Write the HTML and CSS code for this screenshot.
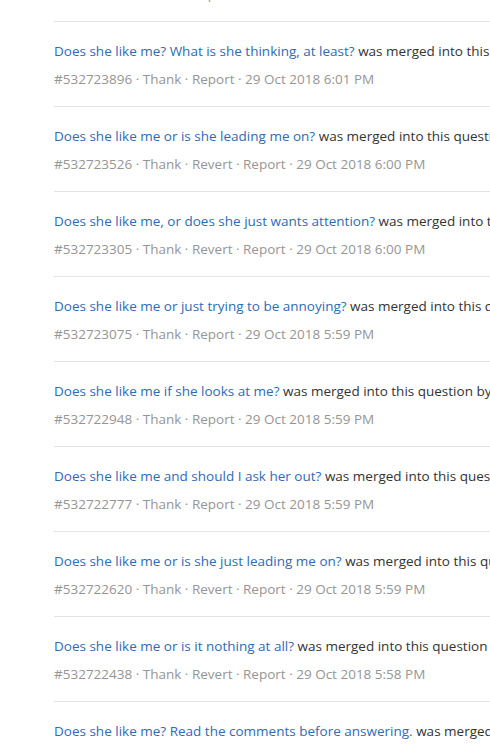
FILE: index.html
```html
<!DOCTYPE html>
<html lang="en">
<head>
    <meta charset="UTF-8">
    <meta name="viewport" content="width=device-width, initial-scale=1.0">
    <title>Merge history</title>
    <link rel="stylesheet" href="styles.css">
</head>
<body>
    <div class="historial">
        <div class="entrada entrada-previa">
            <p class="titulo-entrada"><a href="#">Does she like me?</a> was merged into this question by a moderator</p>
            <p class="meta-entrada">#532724012 · Thank · Report · 29 Oct 2018 6:02 PM</p>
        </div>
        <div class="entrada">
            <p class="titulo-entrada"><a href="#">Does she like me? What is she thinking, at least?</a> was merged into this question by a moderator</p>
            <p class="meta-entrada">#532723896 · Thank · Report · 29 Oct 2018 6:01 PM</p>
        </div>
        <div class="entrada">
            <p class="titulo-entrada"><a href="#">Does she like me or is she leading me on?</a> was merged into this question by a moderator</p>
            <p class="meta-entrada">#532723526 · Thank · Revert · Report · 29 Oct 2018 6:00 PM</p>
        </div>
        <div class="entrada">
            <p class="titulo-entrada"><a href="#">Does she like me, or does she just wants attention?</a> was merged into this question by a moderator</p>
            <p class="meta-entrada">#532723305 · Thank · Revert · Report · 29 Oct 2018 6:00 PM</p>
        </div>
        <div class="entrada">
            <p class="titulo-entrada"><a href="#">Does she like me or just trying to be annoying?</a> was merged into this question by a moderator</p>
            <p class="meta-entrada">#532723075 · Thank · Report · 29 Oct 2018 5:59 PM</p>
        </div>
        <div class="entrada">
            <p class="titulo-entrada"><a href="#">Does she like me if she looks at me?</a> was merged into this question by a moderator</p>
            <p class="meta-entrada">#532722948 · Thank · Report · 29 Oct 2018 5:59 PM</p>
        </div>
        <div class="entrada">
            <p class="titulo-entrada"><a href="#">Does she like me and should I ask her out?</a> was merged into this question by a moderator</p>
            <p class="meta-entrada">#532722777 · Thank · Report · 29 Oct 2018 5:59 PM</p>
        </div>
        <div class="entrada">
            <p class="titulo-entrada"><a href="#">Does she like me or is she just leading me on?</a> was merged into this question by a moderator</p>
            <p class="meta-entrada">#532722620 · Thank · Revert · Report · 29 Oct 2018 5:59 PM</p>
        </div>
        <div class="entrada">
            <p class="titulo-entrada"><a href="#">Does she like me or is it nothing at all?</a> was merged into this question by a moderator</p>
            <p class="meta-entrada">#532722438 · Thank · Revert · Report · 29 Oct 2018 5:58 PM</p>
        </div>
        <div class="entrada">
            <p class="titulo-entrada"><a href="#">Does she like me? Read the comments before answering.</a> was merged into this question by a moderator</p>
            <p class="meta-entrada">#532722301 · Thank · Revert · Report · 29 Oct 2018 5:58 PM</p>
        </div>
    </div>
</body>
</html>
```

FILE: styles.css
```css
:root {
    --color-enlace: #2e6bb5;
    --color-texto: #333333;
    --color-meta: #959595;
    --color-linea: #e3e3e3;
    --fuente-cuerpo: 'Open Sans', 'Noto Sans', sans-serif;
}

* {
    margin: 0; padding: 0; box-sizing: border-box;
}

body {
    font-family: var(--fuente-cuerpo);
    background-color: #ffffff;
    color: var(--color-texto);
    overflow: hidden;
    height: 100vh;
}

.historial {
    margin: -64px 0 0 54px;
    width: 700px;
}

.entrada {
    border-top: 1px solid var(--color-linea);
    padding: 18px 0 16px;
}

.entrada-previa {
    border-top: none;
    padding-top: 19px;
}

.titulo-entrada {
    font-size: 13.5px; line-height: 22px;
    white-space: nowrap;
}

.titulo-entrada a {
    color: var(--color-enlace);
    text-decoration: none;
}

.meta-entrada {
    font-size: 13.5px; line-height: 22px;
    margin-top: 6px;
    color: var(--color-meta);
    white-space: nowrap;
}
```
